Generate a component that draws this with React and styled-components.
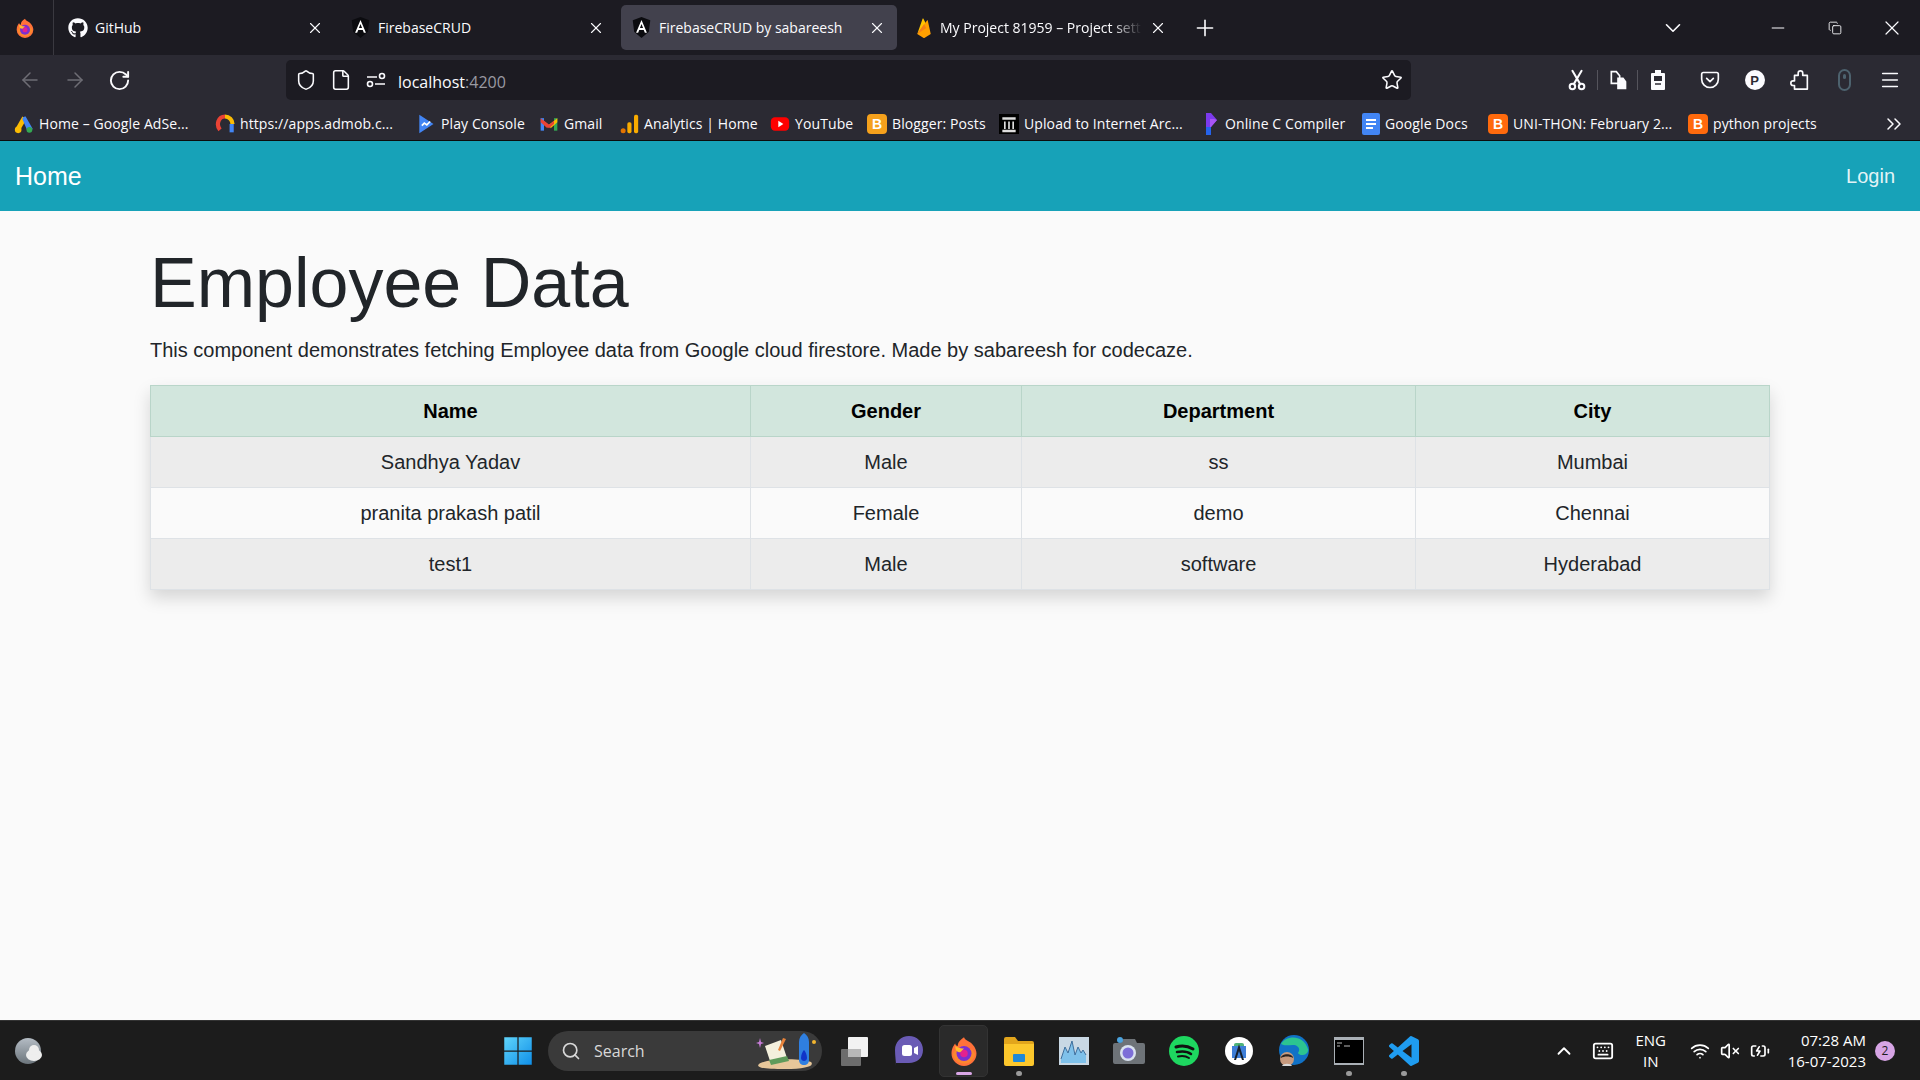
import React from 'react';
import styled, { createGlobalStyle } from 'styled-components';
import {
  ArrowLeft, ArrowRight, RotateCw, Shield, File, Star, Menu, X, Plus,
  ChevronDown, ChevronUp, Minus, Copy, ChevronsRight, Search, Keyboard, Wifi, VolumeX,
  BatteryCharging,
} from 'lucide-react';
import { FaGithub } from 'react-icons/fa';

const Global = createGlobalStyle`
  html, body { margin: 0; padding: 0; height: 100%; background: #fafafa; }
  #root { height: 100%; }
  * { box-sizing: border-box; }
`;

const Page = styled.div`
  width: 1920px;
  height: 1080px;
  display: flex;
  flex-direction: column;
  overflow: hidden;
  font-family: 'Liberation Sans', Arial, sans-serif;
`;

/* browser chrome */
const TabStrip = styled.div`
  height: 55px;
  flex: none;
  display: flex;
  align-items: center;
  background: #1c1b22;
  color: #fbfbfe;
  font-family: 'Open Sans', sans-serif;
  font-size: 14px;
`;
const FoxCell = styled.div`
  width: 54px;
  height: 100%;
  flex: none;
  display: flex;
  align-items: center;
  padding-left: 15px;
  border-right: 1px solid #3a3940;
`;
const Tab = styled.div`
  width: ${(p) => p.$w}px;
  height: 45px;
  flex: none;
  margin-left: ${(p) => p.$ml || 0}px;
  display: flex;
  align-items: center;
  gap: 7px;
  padding: 0 11px 0 ${(p) => p.$pl}px;
  border-radius: 5px;
  background: ${(p) => (p.$active ? '#42414d' : 'transparent')};
`;
const TabTitle = styled.span`
  flex: 1;
  min-width: 0;
  white-space: nowrap;
  overflow: hidden;
  font-size: 14px;
  ${(p) => p.$fade && 'mask-image: linear-gradient(90deg, #000 85%, transparent);'}
`;
const NewTab = styled.div`
  width: 30px;
  display: flex;
  justify-content: center;
  margin-left: 12px;
`;
const WindowButtons = styled.div`
  margin-left: auto;
  display: flex;
  align-items: center;
`;
const Chevron = styled.div`
  width: 30px;
  margin-right: 61px;
  display: flex;
  justify-content: center;
`;
const WinSlot = styled.div`
  width: 57px;
  display: flex;
  justify-content: center;
`;
const Toolbar = styled.div`
  height: 50px;
  flex: none;
  display: flex;
  align-items: center;
  background: #2b2a33;
  color: #fbfbfe;
`;
const NavButtons = styled.div`
  width: 286px;
  flex: none;
  display: flex;
  align-items: center;
  gap: 21px;
  padding-left: 18px;
`;
const UrlBar = styled.div`
  width: 1125px;
  height: 40px;
  flex: none;
  display: flex;
  align-items: center;
  gap: 13px;
  padding: 0 8px 0 9px;
  background: #1c1b22;
  border-radius: 5px;
  font-family: 'Open Sans', sans-serif;
  font-size: 16px;
`;
const UrlText = styled.div`
  flex: 1;
  margin-left: -2px;
  padding-top: 3px;
  span { color: #9a9aa2; }
`;
const ToolIcons = styled.div`
  flex: 1;
  display: flex;
  align-items: center;
  padding-left: 146px;
`;
const ToolSlot = styled.div`
  width: ${(p) => p.$w}px;
  height: 20px;
  flex: none;
  margin-left: ${(p) => p.$ml || 0}px;
  display: flex;
  justify-content: center;
  align-items: center;
  ${(p) => p.$rule && 'border-left: 1px solid #55545c;'}
`;
const PBadge = styled.div`
  width: 20px;
  height: 20px;
  border-radius: 50%;
  background: #fbfbfe;
  color: #2b2a33;
  font-size: 13px;
  font-weight: 700;
  display: flex;
  align-items: center;
  justify-content: center;
`;
const MouseIcon = styled.div`
  width: 13px;
  height: 22px;
  border: 2px solid #4d626e;
  border-radius: 7px;
  display: flex;
  justify-content: center;
  padding-top: 3px;
  &::after {
    content: '';
    width: 3px;
    height: 5px;
    background: #4d626e;
    border-radius: 2px;
  }
`;
const Bookmarks = styled.div`
  height: 36px;
  flex: none;
  display: flex;
  align-items: center;
  padding: 2px 0 0 14px;
  background: #2b2a33;
  color: #fbfbfe;
  font-family: 'Open Sans', sans-serif;
  font-size: 14px;
  letter-spacing: 0.1px;
  border-bottom: 1px solid #0c0c0d;
`;
const Bookmark = styled.div`
  width: ${(p) => p.$w}px;
  flex: none;
  display: flex;
  align-items: center;
  gap: 5px;
  white-space: nowrap;
  overflow: hidden;
`;
const SquareIcon = styled.div`
  width: 20px;
  height: 20px;
  flex: none;
  border-radius: 4px;
  background: ${(p) => p.$bg};
  color: #fff;
  font-size: 14px;
  font-weight: 700;
  display: flex;
  align-items: center;
  justify-content: center;
  font-family: 'Liberation Sans', sans-serif;
`;
const More = styled.div`
  margin-left: auto;
  padding-right: 14px;
  display: flex;
`;

/* app */
const Navbar = styled.nav`
  height: 70px;
  flex: none;
  display: flex;
  align-items: center;
  justify-content: space-between;
  padding: 0 25px 0 15px;
  background: #17a2b8;
  color: #fff;
`;
const Brand = styled.div`
  font-size: 25px;
`;
const Login = styled.div`
  font-size: 20px;
  color: rgba(255, 255, 255, 0.9);
`;
const Content = styled.main`
  flex: 1;
  padding: 30px 151px 0 150px;
  color: #212529;
  background: #fafafa;
`;
const Title = styled.h1`
  margin: 0;
  font-size: 70px;
  font-weight: 400;
  line-height: 1.2;
`;
const Lead = styled.p`
  margin: 10px 0 20px;
  font-size: 20px;
  line-height: 1.5;
`;
const Table = styled.table`
  width: 100%;
  table-layout: fixed;
  border-collapse: collapse;
  text-align: center;
  font-size: 20px;
  box-shadow: 0 8px 16px rgba(0, 0, 0, 0.15);
`;
const Col = styled.col`
  width: ${(p) => p.$w}px;
`;
const HeadCell = styled.th`
  height: 51px;
  padding: 0;
  color: #000;
  background: #d2e6dd;
  border: 1px solid #b9d5c9;
`;
const Row = styled.tr`
  background: ${(p) => (p.$odd ? '#ececec' : '#fafafa')};
`;
const Cell = styled.td`
  height: 51px;
  padding: 0;
  border: 1px solid #dee2e6;
`;

/* windows taskbar */
const Taskbar = styled.div`
  height: 60px;
  flex: none;
  display: grid;
  grid-template-columns: 503px auto 1fr;
  align-items: center;
  background: #1c1c1c;
  border-top: 1px solid #333;
  color: #fff;
  font-family: 'Open Sans', sans-serif;
`;
const Weather = styled.div`
  padding-left: 14px;
  display: flex;
`;
const Center = styled.div`
  display: flex;
  align-items: center;
`;
const SearchBox = styled.div`
  width: 274px;
  height: 40px;
  margin: 0 4px 0 15px;
  display: flex;
  align-items: center;
  gap: 13px;
  padding: 0 3px 0 13px;
  border-radius: 20px;
  background: #3a3a3a;
  color: #d8d8d8;
  font-size: 16px;
  span { flex: 1; }
`;
const TaskIcon = styled.div`
  position: relative;
  width: ${(p) => p.$w || 55}px;
  height: 52px;
  flex: none;
  display: flex;
  align-items: center;
  justify-content: center;
  ${(p) => p.$active && 'margin: 0 3px; width: 49px; background: #2a2a2a; border-radius: 5px; border: 1px solid #333;'}
  &::after {
    content: '';
    display: ${(p) => (p.$dot ? 'block' : 'none')};
    position: absolute;
    bottom: 1px;
    left: 50%;
    width: ${(p) => (p.$dot === 'bar' ? 16 : 6)}px;
    height: ${(p) => (p.$dot === 'bar' ? 3 : 5)}px;
    transform: translateX(-50%);
    border-radius: 3px;
    background: ${(p) => (p.$dot === 'bar' ? '#d9a6e6' : '#9a9a9a')};
  }
`;
const Tray = styled.div`
  display: flex;
  align-items: center;
  justify-content: flex-end;
  padding-right: 25px;
  font-size: 15px;
`;
const TraySlot = styled.div`
  width: ${(p) => p.$w}px;
  flex: none;
  display: flex;
  justify-content: center;
  align-items: center;
`;
const Lang = styled.div`
  width: 50px;
  margin: 0 9px 0 4px;
  text-align: center;
  line-height: 21px;
`;
const Clock = styled.div`
  margin-left: 13px;
  text-align: right;
  line-height: 21px;
`;
const Notify = styled.div`
  width: 20px;
  height: 20px;
  margin-left: 9px;
  border-radius: 50%;
  background: #d6a4e4;
  color: #1c1c1c;
  font-size: 12px;
  display: flex;
  align-items: center;
  justify-content: center;
`;

const FirefoxLogo = ({ s = 20 }) => (
  <svg width={s} height={s} viewBox="0 0 24 24">
    <path d="M12 1c1 3 5 3 7 6 2 2 3 5 3 7a10 10 0 0 1-20 0c0-4 2-7 3-8 0 1 1 2 2 2 0-3 2-5 5-7z" fill="#ff7139" />
    <path d="M3 15c1-4 4-6 9-6 4 0 8 2 9 6-2 5-5 7-9 7-5 0-8-3-9-7z" fill="#f5b21b" opacity=".35" />
    <circle cx="12" cy="14" r="6" fill="#7b2fd0" />
    <circle cx="12" cy="14" r="3" fill="#e3218f" />
    <path d="M5 8c2 1 3 2 7 2l-3 3c-3 0-4-2-4-5z" fill="#ffbd2e" />
  </svg>
);
const AngularLogo = ({ s = 21 }) => (
  <svg width={s} height={s} viewBox="0 0 24 24">
    <path d="M12 0 2 3.6l1.6 13.2L12 24l8.400-7.200L22 3.600z" fill="#0b0b0f" />
    <path d="M12 3.500 5.800 18h2.400l1.200-3.200h5.200l1.200 3.200h2.400zM10.200 12.700 12 8l1.800 4.700z" fill="#fff" />
  </svg>
);
const FirebaseLogo = () => (
  <svg width="18" height="22" viewBox="0 0 24 28">
    <path d="M3 22 10 2c.3-.7 1-.7 1.400 0l3 6z" fill="#ffc400" />
    <path d="M3 22 16 4c.4-.5 1-.4 1.100.3L21 22l-8 5c-.6.300-1.400.300-2 0z" fill="#ffa000" />
    <path d="M3 22 12 9l3 5z" fill="#f57f17" />
  </svg>
);
const AdsLogo = () => (
  <svg width="20" height="20" viewBox="0 0 24 24">
    <circle cx="5" cy="19" r="4" fill="#fbbc04" />
    <path d="M2 17 10 3l5 3-8 14z" fill="#fbbc04" />
    <path d="M14 3l8 14a3.500 3.500 0 0 1-6 3L10 6a3.500 3.500 0 0 1 4-3z" fill="#4285f4" />
    <circle cx="18.500" cy="19" r="3.500" fill="#34a853" />
  </svg>
);
const AdmobLogo = () => (
  <svg width="20" height="22" viewBox="0 0 24 24" fill="none" strokeWidth="5">
    <path d="M6 19C1 13 4 3 12 3" stroke="#ea4335" />
    <path d="M12 3c5 0 9 4 9 9" stroke="#fbbc04" />
    <path d="M20 12v10" stroke="#4285f4" />
  </svg>
);
const PlayLogo = () => (
  <svg width="20" height="22" viewBox="0 0 24 24">
    <path d="M4 1 21 12 4 23z" fill="#4285f4" />
    <path d="m7 14 3-3 3 2 4-4" stroke="#fff" strokeWidth="2" fill="none" />
  </svg>
);
const GmailLogo = () => (
  <svg width="20" height="20" viewBox="0 0 24 24">
    <path d="M2 5h4v15H2z" fill="#4285f4" />
    <path d="M18 5h4v15h-4z" fill="#34a853" />
    <path d="M2 5l10 8-2 4-8-7z" fill="#ea4335" />
    <path d="M22 5l-10 8 2 4 8-7z" fill="#fbbc04" />
    <path d="M6 8l6 5 6-5v4l-6 5-6-5z" fill="#ea4335" />
  </svg>
);
const AnalyticsLogo = () => (
  <svg width="20" height="22" viewBox="0 0 24 24">
    <circle cx="5" cy="20" r="3" fill="#e37400" />
    <rect x="10" y="10" width="5" height="13" rx="2" fill="#f9ab00" />
    <rect x="18" y="1" width="5" height="22" rx="2" fill="#f9ab00" />
  </svg>
);
const YoutubeLogo = () => (
  <svg width="20" height="20" viewBox="0 0 24 24">
    <rect x="1" y="4" width="22" height="16" rx="5" fill="#f00" />
    <path d="m10 8 6 4-6 4z" fill="#fff" />
  </svg>
);
const ArchiveLogo = () => (
  <svg width="20" height="20" viewBox="0 0 24 24">
    <rect width="24" height="24" fill="#000" />
    <path d="M4 4h16v3H4zM6 9h2v9H6zM11 9h2v9h-2zM16 9h2v9h-2zM4 19h16v3H4z" fill="#ddd" />
  </svg>
);
const ReplitLogo = () => (
  <svg width="18" height="24" viewBox="0 0 18 24">
    <path d="M4 1h5l6 7-6 7H4z" fill="#7c3aed" />
    <path d="M4 15h5v8H4z" fill="#2563eb" />
    <path d="M8 7h4l3 1-6 7H8z" fill="#a855f7" />
  </svg>
);
const DocsIcon = () => (
  <svg width="18" height="22" viewBox="0 0 18 22">
    <rect width="18" height="22" rx="2" fill="#4285f4" />
    <path d="M4 7h10M4 11h10M4 15h7" stroke="#fff" strokeWidth="2" />
  </svg>
);
const PermissionsIcon = () => (
  <svg width="22" height="22" viewBox="0 0 22 22" fill="none" stroke="#fbfbfe" strokeWidth="1.600">
    <path d="M2 8h10M10 15h10" />
    <circle cx="17" cy="7" r="2.500" />
    <circle cx="5" cy="15" r="2.500" />
  </svg>
);
const ScissorsIcon = () => (
  <svg width="20" height="22" viewBox="0 0 20 24" fill="none" stroke="#fbfbfe" strokeWidth="2.200" strokeLinecap="round">
    <circle cx="5" cy="19" r="3" />
    <circle cx="15" cy="19" r="3" />
    <path d="M6.500 16.500 15 2M13.500 16.500 5 2" />
  </svg>
);
const PocketIcon = () => (
  <svg width="20" height="20" viewBox="0 0 24 24" fill="none" stroke="#fbfbfe" strokeWidth="2" strokeLinecap="round" strokeLinejoin="round">
    <path d="M4 3h16a2 2 0 0 1 2 2v6a10 10 0 0 1-20 0V5a2 2 0 0 1 2-2z" />
    <path d="m8 10 4 4 4-4" />
  </svg>
);
const PagesIcon = () => (
  <svg width="20" height="22" viewBox="0 0 24 24" fill="none" stroke="#fbfbfe" strokeWidth="2">
    <path d="M4 2h6l4 5v9H4z" />
    <path d="M12 10h6l3 4v8h-9z" fill="#fbfbfe" />
  </svg>
);
const DeviceIcon = () => (
  <svg width="16" height="22" viewBox="0 0 16 22">
    <path d="M5 1h6v3h3a1 1 0 0 1 1 1v15a1 1 0 0 1-1 1H2a1 1 0 0 1-1-1V5a1 1 0 0 1 1-1h3z" fill="#fbfbfe" />
    <rect x="4" y="7" width="8" height="5" fill="#2b2a33" />
    <path d="M5 15h6" stroke="#2b2a33" strokeWidth="1.500" />
  </svg>
);
const ExtensionIcon = () => (
  <svg width="22" height="22" viewBox="0 0 24 24" fill="none" stroke="#fbfbfe" strokeWidth="1.800" strokeLinejoin="round">
    <path d="M10 7V4.500a2.500 2.500 0 0 1 5 0V7h5v15H6v-4H4.500a2.500 2.500 0 0 1 0-5H6V7z" />
  </svg>
);
const WindowsLogo = () => (
  <svg width="30" height="30" viewBox="0 0 24 24">
    <defs>
      <linearGradient id="win" x1="0" y1="0" x2="1" y2="1">
        <stop offset="0" stopColor="#5fd4fb" />
        <stop offset="1" stopColor="#0f8fe8" />
      </linearGradient>
    </defs>
    <path d="M1 1h10.500v10.500H1zM12.500 1H23v10.500H12.500zM1 12.500h10.500V23H1zM12.500 12.500H23V23H12.500z" fill="url(#win)" />
  </svg>
);
const WeatherIcon = () => (
  <svg width="30" height="30" viewBox="0 0 30 30">
    <defs>
      <linearGradient id="moon" x1="0" y1="0" x2="0" y2="1">
        <stop offset="0" stopColor="#b4bcc4" />
        <stop offset="1" stopColor="#6c757c" />
      </linearGradient>
    </defs>
    <circle cx="14" cy="15" r="13" fill="url(#moon)" />
    <ellipse cx="20" cy="19" rx="8" ry="6" fill="#eee" />
    <circle cx="20" cy="14" r="5" fill="#eee" />
  </svg>
);
const SearchArt = () => (
  <svg width="64" height="38" viewBox="0 0 64 38">
    <path d="M4 32c8-6 44-6 52-2 4 4-6 7-26 7S0 36 4 32z" fill="#e7c79a" />
    <path d="M10 14 26 8l6 18-16 6z" fill="#f4f0dd" />
    <path d="M14 28 32 24l2 5-18 4z" fill="#5f9b5b" />
    <path d="M28 6l3 1-6 12-2-1z" fill="#e8833a" />
    <path d="M44 10c0-4 2-7 5-9 3 2 5 5 5 9v18c0 3-2 5-5 5s-5-2-5-5z" fill="#2f7fe0" />
    <path d="M46 26c0-4 2-7 3-8 1 1 3 4 3 8s-6 4-6 0z" fill="#1034c8" />
    <path d="M5 6l1 4 3 1-3 1-1 4-1-4-3-1 3-1z" fill="#c77dd8" />
    <circle cx="59" cy="10" r="2" fill="#f3b52f" />
  </svg>
);
const TaskView = () => (
  <svg width="30" height="32" viewBox="0 0 30 32">
    <rect x="9" y="2" width="20" height="20" rx="1" fill="#f2f2f2" />
    <rect x="2" y="14" width="20" height="17" rx="1" fill="#6d6d6d" />
    <rect x="9" y="14" width="13" height="8" fill="#b8b8b8" />
  </svg>
);
const ChatIcon = () => (
  <svg width="30" height="32" viewBox="0 0 30 32">
    <path d="M15 1c8 0 14 6 14 14s-6 13-14 13H2v3c0-5-1-10-1-16C1 7 7 1 15 1z" fill="#6a5bb5" />
    <rect x="8" y="10" width="10" height="11" rx="2.500" fill="#fff" />
    <path d="m20 13 4-2v9l-4-2z" fill="#fff" />
  </svg>
);
const FolderIcon = () => (
  <svg width="30" height="30" viewBox="0 0 30 30">
    <path d="M0 3a2 2 0 0 1 2-2h9l3 4h14a2 2 0 0 1 2 2v4H0z" fill="#e2a51c" />
    <path d="M0 8h30v20a2 2 0 0 1-2 2H2a2 2 0 0 1-2-2z" fill="#fcc72c" />
    <rect x="9" y="18" width="12" height="8" rx="1" fill="#1e88d8" />
  </svg>
);
const PhotosIcon = () => (
  <svg width="30" height="28" viewBox="0 0 30 28">
    <rect width="30" height="28" fill="#c9d8e4" />
    <path d="M2 22 6 10l3 6 4-12 3 14 3-8 3 6 2-3 3 5v8H2z" fill="#7fc1ea" />
    <path d="M2 22 6 10l3 6 4-12 3 14 3-8 3 6 2-3 3 5" fill="none" stroke="#3f6f9d" />
  </svg>
);
const CameraIcon = () => (
  <svg width="32" height="28" viewBox="0 0 32 28">
    <path d="M2 6h6l2-4h12l2 4h6a2 2 0 0 1 2 2v17a2 2 0 0 1-2 2H2a2 2 0 0 1-2-2V8a2 2 0 0 1 2-2z" fill="#6e7378" />
    <circle cx="15" cy="16" r="8" fill="#d9e2ef" />
    <circle cx="15" cy="16" r="5.500" fill="#7d6fd8" />
    <circle cx="7" cy="3" r="3" fill="#4aa3df" />
  </svg>
);
const SpotifyIcon = () => (
  <svg width="30" height="30" viewBox="0 0 30 30" fill="none" stroke="#111" strokeLinecap="round">
    <circle cx="15" cy="15" r="15" fill="#1ed760" stroke="none" />
    <path d="M7 11c6-2 12-1 17 2" strokeWidth="3" />
    <path d="M8 16c5-1 10-1 14 2" strokeWidth="2.500" />
    <path d="M9 20.500c4-1 8-.5 11 1.500" strokeWidth="2" />
  </svg>
);
const StudioIcon = () => (
  <svg width="30" height="30" viewBox="0 0 30 30">
    <circle cx="15" cy="15" r="14" fill="#fff" />
    <rect x="10" y="7" width="10" height="14" rx="2" fill="#4fb37a" />
    <rect x="8" y="10" width="14" height="12" fill="#3f7fd8" />
    <path d="M15 8 10 24h2l3-9 3 9h2z" fill="#16202e" />
  </svg>
);
const EdgeIcon = () => (
  <svg width="30" height="32" viewBox="0 0 30 32">
    <circle cx="15" cy="15" r="15" fill="#1172c6" />
    <path d="M2 9C6 1 24-2 29 14c1 6-8 8-10 4 3-4 0-8-5-8-5 0-9 1-12-1z" fill="#2cc490" />
    <circle cx="8" cy="24" r="7" fill="#c79a7e" />
    <path d="M2 23c0-5 12-5 12 0-3-2-9-2-12 0z" fill="#2b2320" />
    <path d="M3 31c1-3 9-3 10 0z" fill="#d8d8d8" />
  </svg>
);
const TerminalIcon = () => (
  <svg width="30" height="28" viewBox="0 0 30 28">
    <rect width="30" height="28" fill="#aab0b6" />
    <rect x="1" y="3" width="28" height="23" fill="#000" />
    <path d="M3 6h5M3 9h3M10 9h6" stroke="#bbb" />
  </svg>
);
const VscodeIcon = () => (
  <svg width="30" height="30" viewBox="0 0 24 24">
    <path
      d="M23.150 2.587 18.210.21a1.494 1.494 0 0 0-1.705.29l-9.460 8.630-4.120-3.128a.999.999 0 0 0-1.276.057L.327 7.261A1 1 0 0 0 .326 8.740L3.899 12 .326 15.260a1 1 0 0 0 .001 1.479L1.650 17.940a.999.999 0 0 0 1.276.057l4.120-3.128 9.460 8.630a1.492 1.492 0 0 0 1.704.29l4.942-2.377A1.500 1.500 0 0 0 24 20.060V3.939a1.500 1.500 0 0 0-.85-1.352zm-5.146 14.861L10.826 12l7.178-5.448v10.896z"
      fill="#1f9cf0"
    />
  </svg>
);

const bookmarks = [
  { w: 201, icon: <AdsLogo />, label: 'Home – Google AdSe...' },
  { w: 201, icon: <AdmobLogo />, label: 'https://apps.admob.c...' },
  { w: 123, icon: <PlayLogo />, label: 'Play Console' },
  { w: 80, icon: <GmailLogo />, label: 'Gmail' },
  { w: 151, icon: <AnalyticsLogo />, label: 'Analytics | Home' },
  { w: 97, icon: <YoutubeLogo />, label: 'YouTube' },
  { w: 132, icon: <SquareIcon $bg="#f5a11c">B</SquareIcon>, label: 'Blogger: Posts' },
  { w: 203, icon: <ArchiveLogo />, label: 'Upload to Internet Arc...' },
  { w: 160, icon: <ReplitLogo />, label: 'Online C Compiler' },
  { w: 126, icon: <DocsIcon />, label: 'Google Docs' },
  { w: 200, icon: <SquareIcon $bg="#ff6a0d">B</SquareIcon>, label: 'UNI-THON: February 2...' },
  { w: 140, icon: <SquareIcon $bg="#ff6a0d">B</SquareIcon>, label: 'python projects' },
];

const employees = [
  ['Sandhya Yadav', 'Male', 'ss', 'Mumbai'],
  ['pranita prakash patil', 'Female', 'demo', 'Chennai'],
  ['test1', 'Male', 'software', 'Hyderabad'],
];

const App = () => (
  <Page>
    <Global />
    <TabStrip>
      <FoxCell><FirefoxLogo /></FoxCell>
      <Tab $w={281} $pl={14}>
        <FaGithub size={20} />
        <TabTitle>GitHub</TabTitle>
        <X size={18} strokeWidth={1.5} />
      </Tab>
      <Tab $w={281} $pl={15}>
        <AngularLogo />
        <TabTitle>FirebaseCRUD</TabTitle>
        <X size={18} strokeWidth={1.5} />
      </Tab>
      <Tab $w={276} $pl={10} $ml={5} $active>
        <AngularLogo />
        <TabTitle>FirebaseCRUD by sabareesh</TabTitle>
        <X size={18} strokeWidth={1.5} />
      </Tab>
      <Tab $w={276} $pl={13} $ml={5}>
        <FirebaseLogo />
        <TabTitle $fade>My Project 81959 – Project settings</TabTitle>
        <X size={18} strokeWidth={1.5} />
      </Tab>
      <NewTab><Plus size={26} strokeWidth={1.5} /></NewTab>
      <WindowButtons>
        <Chevron><ChevronDown size={26} strokeWidth={1.5} /></Chevron>
        <WinSlot><Minus size={20} strokeWidth={1.2} /></WinSlot>
        <WinSlot><Copy size={14} strokeWidth={1.5} /></WinSlot>
        <WinSlot><X size={24} strokeWidth={1.2} /></WinSlot>
      </WindowButtons>
    </TabStrip>

    <Toolbar>
      <NavButtons>
        <ArrowLeft size={24} strokeWidth={1.5} color="#6e6d75" />
        <ArrowRight size={24} strokeWidth={1.5} color="#6e6d75" />
        <RotateCw size={23} />
      </NavButtons>
      <UrlBar>
        <Shield size={22} strokeWidth={1.7} />
        <File size={22} strokeWidth={1.7} />
        <PermissionsIcon />
        <UrlText>localhost<span>:4200</span></UrlText>
        <Star size={22} strokeWidth={1.7} />
      </UrlBar>
      <ToolIcons>
        <ToolSlot $w={40}><ScissorsIcon /></ToolSlot>
        <ToolSlot $w={40} $rule><PagesIcon /></ToolSlot>
        <ToolSlot $w={40} $rule><DeviceIcon /></ToolSlot>
        <ToolSlot $w={45} $ml={10}><PocketIcon /></ToolSlot>
        <ToolSlot $w={45}><PBadge>P</PBadge></ToolSlot>
        <ToolSlot $w={45}><ExtensionIcon /></ToolSlot>
        <ToolSlot $w={45}><MouseIcon /></ToolSlot>
        <ToolSlot $w={45}><Menu size={22} strokeWidth={1.7} /></ToolSlot>
      </ToolIcons>
    </Toolbar>

    <Bookmarks>
      {bookmarks.map((b) => (
        <Bookmark key={b.label} $w={b.w}>
          {b.icon}
          {b.label}
        </Bookmark>
      ))}
      <More><ChevronsRight size={24} strokeWidth={1.5} /></More>
    </Bookmarks>

    <Navbar>
      <Brand>Home</Brand>
      <Login>Login</Login>
    </Navbar>

    <Content>
      <Title>Employee Data</Title>
      <Lead>This component demonstrates fetching Employee data from Google cloud firestore. Made by sabareesh for codecaze.</Lead>
      <Table>
        <colgroup>
          <Col $w={600} />
          <Col $w={271} />
          <Col $w={394} />
          <Col $w={354} />
        </colgroup>
        <thead>
          <tr>
            {['Name', 'Gender', 'Department', 'City'].map((h) => (
              <HeadCell key={h}>{h}</HeadCell>
            ))}
          </tr>
        </thead>
        <tbody>
          {employees.map((row, i) => (
            <Row key={row[0]} $odd={i % 2 === 0}>
              {row.map((c) => (
                <Cell key={c}>{c}</Cell>
              ))}
            </Row>
          ))}
        </tbody>
      </Table>
    </Content>

    <Taskbar>
      <Weather><WeatherIcon /></Weather>
      <Center>
        <WindowsLogo />
        <SearchBox>
          <Search size={20} />
          <span>Search</span>
          <SearchArt />
        </SearchBox>
        <TaskIcon><TaskView /></TaskIcon>
        <TaskIcon><ChatIcon /></TaskIcon>
        <TaskIcon $active $dot="bar"><FirefoxLogo s={30} /></TaskIcon>
        <TaskIcon $dot="dot"><FolderIcon /></TaskIcon>
        <TaskIcon><PhotosIcon /></TaskIcon>
        <TaskIcon><CameraIcon /></TaskIcon>
        <TaskIcon><SpotifyIcon /></TaskIcon>
        <TaskIcon><StudioIcon /></TaskIcon>
        <TaskIcon><EdgeIcon /></TaskIcon>
        <TaskIcon $dot="dot"><TerminalIcon /></TaskIcon>
        <TaskIcon $dot="dot"><VscodeIcon /></TaskIcon>
      </Center>
      <Tray>
        <TraySlot $w={40}><ChevronUp size={22} /></TraySlot>
        <TraySlot $w={38}><Keyboard size={22} /></TraySlot>
        <Lang>ENG<br />IN</Lang>
        <TraySlot $w={30}><Wifi size={20} /></TraySlot>
        <TraySlot $w={30}><VolumeX size={20} /></TraySlot>
        <TraySlot $w={30}><BatteryCharging size={20} /></TraySlot>
        <Clock>07:28 AM<br />16-07-2023</Clock>
        <Notify>2</Notify>
      </Tray>
    </Taskbar>
  </Page>
);

export default App;
